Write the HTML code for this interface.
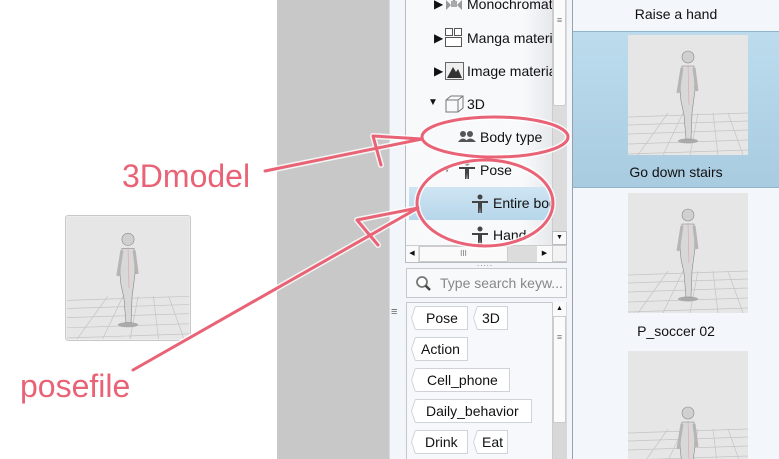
<!DOCTYPE html>
<html style="overflow:hidden"><head><meta charset="utf-8"><style>
*{margin:0;padding:0;box-sizing:border-box}
html,body{width:779px;height:459px;overflow:hidden}
body{background:#fff;position:relative;font-family:"Liberation Sans",sans-serif;font-size:14px;color:#111}
.a{position:absolute}
.tag{position:absolute;height:24px;background:#fff;border:1px solid #cfd3d8;border-left:none;padding-left:14px;line-height:22px;font-size:14px;clip-path:polygon(4px 0,100% 0,100% 100%,4px 100%,0 50%)}
.tagb{position:absolute;height:24px;background:#cfd3d8;clip-path:polygon(4px 0,100% 0,100% 100%,4px 100%,0 50%)}
.ti{position:absolute;font-size:14px;white-space:nowrap}
.lbl{position:absolute;left:573px;width:206px;text-align:center;font-size:14px}
</style></head><body>
<svg width="0" height="0" style="position:absolute">
<defs>
<symbol id="th" viewBox="0 0 120 120">
<rect width="120" height="120" fill="#e6e6e6"/>
<g stroke="#c4c4c4" stroke-width="0.7" fill="none">
<path d="M0 82 L120 78 M0 90 L120 86 M0 99 L120 95 M0 109 L120 105 M0 119 L120 115 M10 120 L40 78 M35 120 L55 78 M62 120 L70 78 M90 120 L85 78 M115 120 L100 78"/>
</g>
</symbol>
<symbol id="fig" viewBox="0 0 120 120">
<ellipse cx="60" cy="106" rx="10" ry="2.5" fill="#aaa"/>
<circle cx="60" cy="22" r="6" fill="#d0d0d0" stroke="#888" stroke-width=".6"/>
<path d="M54 31 L66 31 L67 55 L64 78 L63 104 L58 104 L56 80 L53 66 L52 55Z" fill="#d8d8d8" stroke="#888" stroke-width=".6"/>
<path d="M54 33 L50 58 M66 33 L69 56" stroke="#b5b5b5" stroke-width="3"/>
<path d="M60 30 L61 70" stroke="#e5a0a8" stroke-width=".6"/>
</symbol>
</defs></svg>

<div class="a" style="left:65px;top:215px;width:126px;height:126px;border:1px solid #c8c8cc;border-radius:3px;background:#ececec"></div>
<svg class="a" style="left:67px;top:217px" width="122" height="122"><use href="#th"/><use href="#fig"/></svg>

<div class="a" style="left:277px;top:0;width:112px;height:459px;background:#c8c8c8"></div>
<div class="a" style="left:389px;top:0;width:184px;height:459px;background:#f2f5f9;border-left:1px solid #d8dce0"></div>
<div class="a" style="left:391px;top:306px;font-size:11px;color:#666">≡</div>

<div class="a" style="left:405px;top:0;width:162px;height:263px;background:#f6f8fb;border:1px solid #b8bcc2;border-top:none"></div>
<div class="a" style="left:406px;top:0;width:146px;height:245px;background:linear-gradient(90deg,#f7f9fb 80%,#e6e8eb)"></div>
<div class="a" style="left:409px;top:187px;width:143px;height:33px;background:linear-gradient(#cfe5f3,#b6d6ea)"></div>
<div class="ti" style="left:434px;top:-3px;font-size:12px">▶</div>
<svg class="a" style="left:445px;top:0" width="18" height="14"><path d="M1 0 L6 5 L1 10Z M17 0 L12 5 L17 10Z M4 -4 L9 2 L14 -4Z" fill="#999"/><rect x="6" y="1" width="6" height="6" fill="#aaa"/></svg>
<div class="ti" style="left:467px;top:-4px">Monochromati</div>
<div class="ti" style="left:434px;top:31px;font-size:12px">▶</div>
<svg class="a" style="left:445px;top:28px" width="18" height="20"><rect x=".5" y=".5" width="7" height="7" fill="#fff" stroke="#555"/><rect x="9.5" y=".5" width="7" height="7" fill="#fff" stroke="#555"/><rect x=".5" y="9.5" width="16" height="9" fill="#fff" stroke="#555"/></svg>
<div class="ti" style="left:467px;top:30px;width:85px;overflow:hidden">Manga materials</div>
<div class="ti" style="left:434px;top:64px;font-size:12px">▶</div>
<svg class="a" style="left:445px;top:62px" width="19" height="18"><rect x=".5" y=".5" width="18" height="17" fill="#eee" stroke="#666"/><path d="M2 16 L8 5 L11 10 L13 7 L17 16Z" fill="#333"/></svg>
<div class="ti" style="left:467px;top:63px;width:85px;overflow:hidden">Image materials</div>
<div class="ti" style="left:428px;top:97px;font-size:10px">▼</div>
<svg class="a" style="left:445px;top:95px" width="19" height="18"><path d="M1 5 L6 1 L18 1 L18 13 L13 17 L1 17Z M1 5 L13 5 L13 17 M13 5 L18 1" fill="none" stroke="#777"/></svg>
<div class="ti" style="left:467px;top:96px">3D</div>
<svg class="a" style="left:457px;top:130px" width="20" height="13"><circle cx="6" cy="4" r="3" fill="#555"/><circle cx="13" cy="4" r="3" fill="#555"/><path d="M1 12 Q6 5 11 12Z M8 12 Q13 5 19 12Z" fill="#555"/></svg>
<div class="ti" style="left:480px;top:129px">Body type</div>
<div class="ti" style="left:442px;top:164px;font-size:10px">▼</div>
<svg class="a" style="left:459px;top:160px" width="16" height="20"><circle cx="8" cy="3" r="2.5" fill="#444"/><path d="M0 7 L16 7 L16 9 L10 9 L10 19 L8.5 19 L8 13 L7.5 19 L6 19 L6 9 L0 9Z" fill="#444"/></svg>
<div class="ti" style="left:480px;top:162px">Pose</div>
<svg class="a" style="left:472px;top:194px" width="16" height="20"><circle cx="8" cy="3" r="2.5" fill="#444"/><path d="M0 7 L16 7 L16 9 L10 9 L10 19 L8.5 19 L8 13 L7.5 19 L6 19 L6 9 L0 9Z" fill="#444"/></svg>
<div class="ti" style="left:493px;top:195px;width:59px;overflow:hidden">Entire body</div>
<svg class="a" style="left:472px;top:226px" width="16" height="20"><circle cx="8" cy="3" r="2.5" fill="#444"/><path d="M0 7 L16 7 L16 9 L10 9 L10 19 L8.5 19 L8 13 L7.5 19 L6 19 L6 9 L0 9Z" fill="#444"/></svg>
<div class="ti" style="left:493px;top:227px">Hand</div>
<div class="a" style="left:552px;top:0;width:15px;height:245px;background:#dcdcdc;border-left:1px solid #ccc"></div>
<div class="a" style="left:553px;top:0;width:13px;height:106px;background:#fbfbfb;border:1px solid #ccc;border-top:none;border-radius:0 0 2px 2px;text-align:center;font-size:9px;color:#777;line-height:40px">≡</div>
<div class="a" style="left:552px;top:231px;width:15px;height:14px;background:#fafafa;border:1px solid #bbb;font-size:7px;text-align:center;line-height:12px">▼</div>
<div class="a" style="left:406px;top:245px;width:146px;height:17px;background:#dcdcdc;border-top:1px solid #ccc"></div>
<div class="a" style="left:406px;top:246px;width:12px;height:16px;background:#fafafa;font-size:7px;line-height:16px;text-align:center">◀</div>
<div class="a" style="left:419px;top:246px;width:89px;height:16px;background:#fafafa;border:1px solid #ccc;text-align:center;font-size:8px;line-height:14px;color:#777">III</div>
<div class="a" style="left:537px;top:246px;width:15px;height:16px;background:#fafafa;font-size:7px;line-height:16px;text-align:center">▶</div>
<div class="a" style="left:552px;top:245px;width:15px;height:17px;background:#f3f3f3;border:1px solid #ccc"></div>
<div class="a" style="left:477px;top:259px;font-size:8px;color:#777;letter-spacing:1px">.....</div>

<div class="a" style="left:406px;top:268px;width:161px;height:30px;background:#f7f9fb;border:1px solid #c4c8cd"></div>
<svg class="a" style="left:415px;top:275px" width="17" height="17"><circle cx="7" cy="7" r="5" fill="#fff" stroke="#777" stroke-width="1.8"/><path d="M10.5 10.5 L15 15" stroke="#444" stroke-width="2.5"/></svg>
<div class="ti" style="left:440px;top:275px;color:#888">Type search keyw...</div>

<div class="a" style="left:406px;top:302px;width:161px;height:157px;background:#f6f8fb;border:1px solid #c4c8cd;border-bottom:none"></div>
<div class="a" style="left:552px;top:302px;width:15px;height:157px;background:#d8d8d8;border-left:1px solid #ccc"></div>
<div class="a" style="left:553px;top:302px;width:13px;height:14px;background:#fafafa;font-size:7px;text-align:center;line-height:14px">▲</div>
<div class="a" style="left:553px;top:316px;width:13px;height:107px;background:#fbfbfb;border:1px solid #ccc;font-size:9px;color:#777;text-align:center;line-height:40px">≡</div>
<div class="tagb" style="left:411px;top:306px;width:57px"></div><div class="tag" style="left:412px;top:306px;width:56px">Pose</div>
<div class="tagb" style="left:473px;top:306px;width:35px"></div><div class="tag" style="left:474px;top:306px;width:34px;padding-left:8px">3D</div>
<div class="tagb" style="left:411px;top:337px;width:57px"></div><div class="tag" style="left:412px;top:337px;width:56px;padding-left:9px">Action</div>
<div class="tagb" style="left:411px;top:368px;width:99px"></div><div class="tag" style="left:412px;top:368px;width:98px;padding-left:15px">Cell_phone</div>
<div class="tagb" style="left:411px;top:399px;width:121px"></div><div class="tag" style="left:412px;top:399px;width:120px;padding-left:14px">Daily_behavior</div>
<div class="tagb" style="left:411px;top:430px;width:57px"></div><div class="tag" style="left:412px;top:430px;width:56px;padding-left:13px">Drink</div>
<div class="tagb" style="left:473px;top:430px;width:35px"></div><div class="tag" style="left:474px;top:430px;width:34px;padding-left:8px">Eat</div>

<div class="a" style="left:572px;top:0;width:207px;height:459px;background:#f3f7fc;border-left:1px solid #9aa0a8"></div>
<div class="lbl" style="top:6px">Raise a hand</div>
<div class="a" style="left:573px;top:31px;width:206px;height:157px;background:linear-gradient(#bcdcee,#a9cbe0);border-top:1px solid #90b4cc;border-bottom:1px solid #90b4cc"></div>
<svg class="a" style="left:628px;top:35px" width="120" height="120"><use href="#th"/><use href="#fig"/></svg>
<div class="lbl" style="top:164px">Go down stairs</div>
<svg class="a" style="left:628px;top:193px" width="120" height="120"><use href="#th"/><use href="#fig"/></svg>
<div class="lbl" style="top:323px">P_soccer 02</div>
<div class="a" style="left:628px;top:351px;width:120px;height:108px;overflow:hidden">
<svg width="120" height="120" style="display:block"><use href="#th"/><g transform="translate(0,40)"><use href="#fig"/></g></svg>
</div>

<svg class="a" style="left:0;top:0" width="779" height="459">
<g fill="none" stroke="#fff" stroke-width="6" stroke-linecap="round" stroke-linejoin="round" opacity=".8">
<ellipse cx="495" cy="137" rx="73" ry="20"/>
<ellipse cx="485" cy="203" rx="68" ry="43"/>
<path d="M265 171 L422 139 M381 165 L373 136 L422 139"/>
<path d="M133 370 L418 208 M378 245 L357 220 L418 208"/>
</g>
<g fill="none" stroke="#e96376" stroke-width="3" stroke-linecap="round" stroke-linejoin="round">
<ellipse cx="495" cy="137" rx="73" ry="20"/>
<ellipse cx="485" cy="203" rx="68" ry="43"/>
<path d="M265 171 L422 139 M381 165 L373 136 L422 139"/>
<path d="M133 370 L418 208 M378 245 L357 220 L418 208"/>
</g>
<text x="122" y="187" font-family="Liberation Sans" font-size="32" fill="#e96376">3Dmodel</text>
<text x="20" y="397" font-family="Liberation Sans" font-size="32" fill="#e96376">posefile</text>
</svg>
</body></html>
